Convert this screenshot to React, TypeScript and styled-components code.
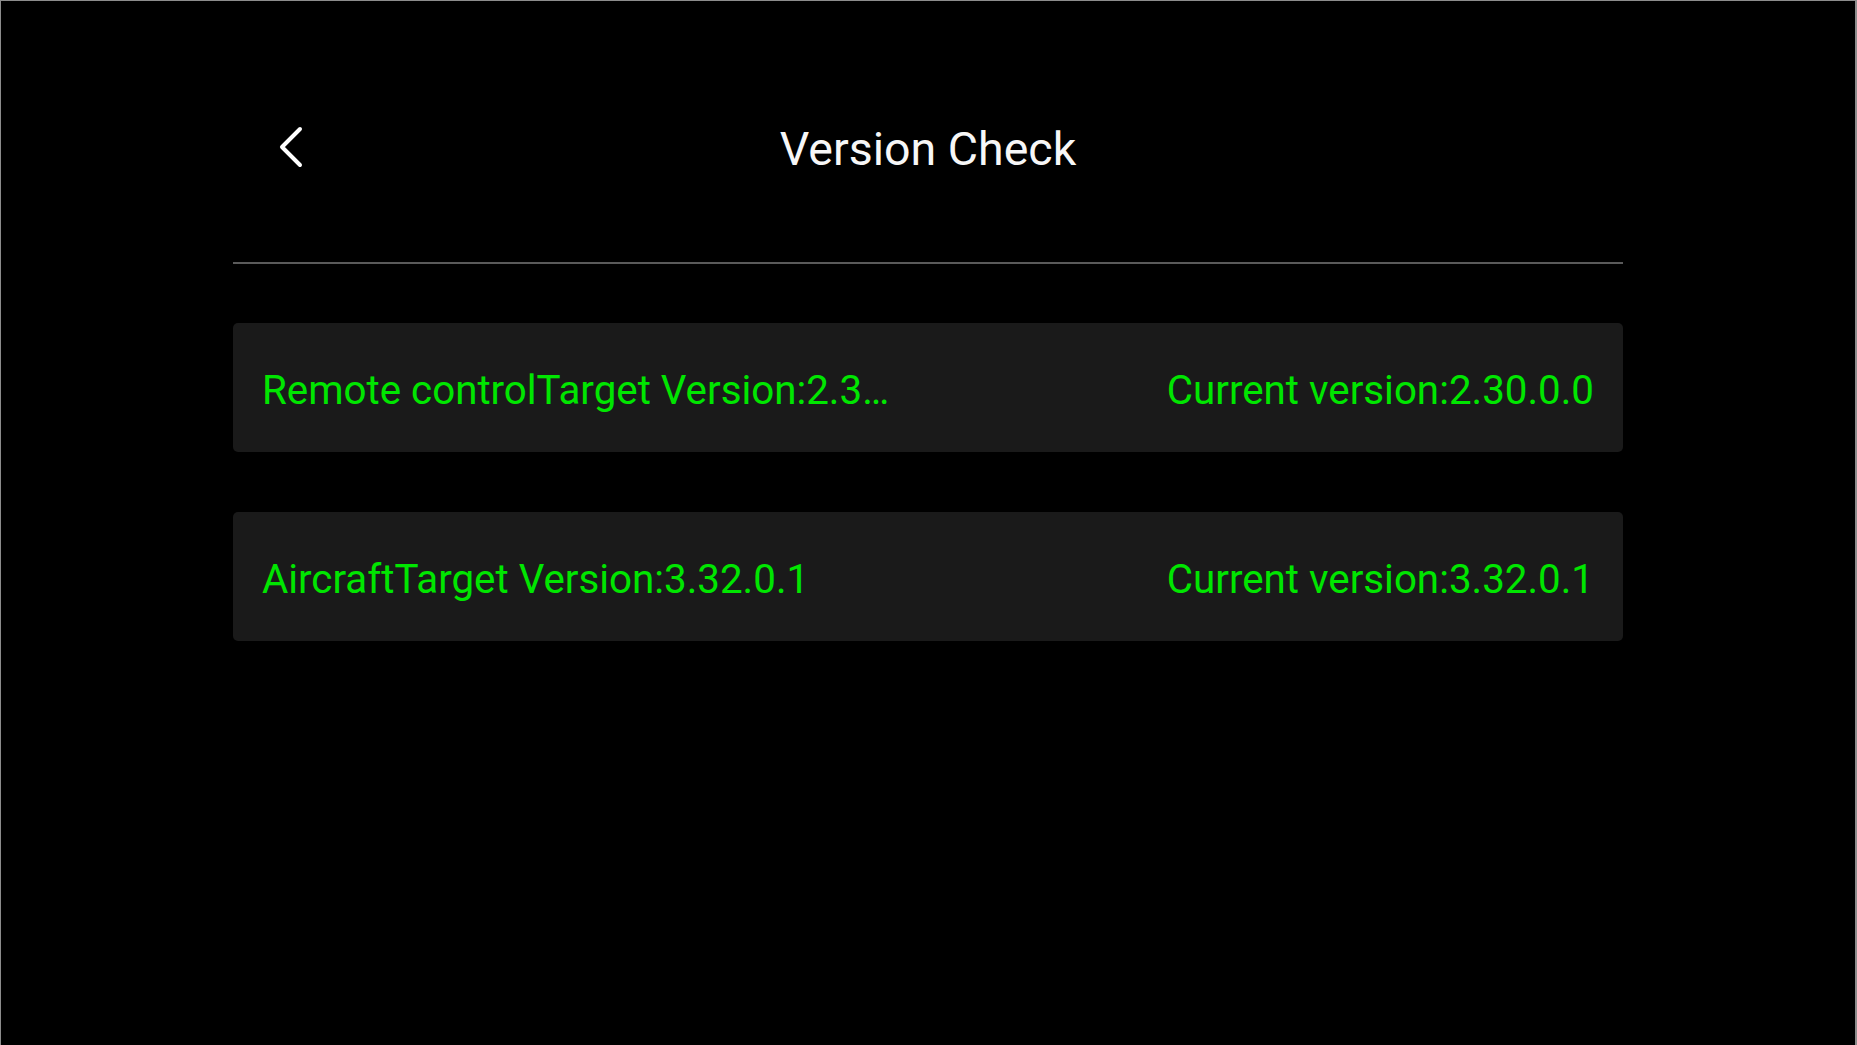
import React from 'react';
import styled, {createGlobalStyle} from 'styled-components';

interface VersionRowProps {
  target: string;
  current: string;
}

const GlobalStyle = createGlobalStyle`
  html, body {
    margin: 0;
    padding: 0;
    background: #000;
  }
  * {
    box-sizing: border-box;
  }
`;

const Screen = styled.div`
  width: 1857px;
  height: 1045px;
  background: #000;
  border-top: 1px solid #8c8c8c;
  border-left: 1px solid #8c8c8c;
  border-right: 2px solid #8c8c8c;
  font-family: Roboto, 'Noto Sans', sans-serif;
  overflow: hidden;
`;

const Content = styled.div`
  margin: 0 232px 0 232px;
  display: flex;
  flex-direction: column;
`;

const Header = styled.header`
  display: grid;
  grid-template-columns: 1fr auto 1fr;
  align-items: center;
  height: 100px;
  margin-top: 98px;
  margin-bottom: 63px;
`;

const BackButton = styled.button`
  justify-self: start;
  display: flex;
  align-items: center;
  margin-left: 45px;
  margin-top: -4px;
  padding: 0;
  border: none;
  background: none;
  cursor: pointer;
`;

const Title = styled.h1`
  margin: 0;
  font-size: 46.5px;
  font-weight: 400;
  color: #f7f7f7;
  white-space: nowrap;
`;

const Divider = styled.hr`
  margin: 0;
  border: none;
  height: 2px;
  background: #5a5a5a;
`;

const List = styled.div`
  display: flex;
  flex-direction: column;
  gap: 60px;
  margin-top: 59px;
`;

const Row = styled.div`
  display: flex;
  align-items: center;
  justify-content: space-between;
  height: 129px;
  padding: 5px 29px 0;
  border-radius: 5px;
  background: #1a1a1a;
`;

const Label = styled.span<{$truncate?: boolean}>`
  font-size: 40.3px;
  color: #00e600;
  white-space: nowrap;
  overflow: hidden;
  text-overflow: ellipsis;
  max-width: ${(p) => (p.$truncate ? '643px' : 'none')};
`;

const Chevron = () => (
  <svg width="26" height="42" viewBox="0 0 26 42">
    <polyline
      points="22,3 4,21 22,39"
      fill="none"
      stroke="#fff"
      strokeWidth="4"
      strokeLinecap="round"
      strokeLinejoin="round"
    />
  </svg>
);

const VersionRow = ({target, current}: VersionRowProps) => (
  <Row>
    <Label $truncate>{target}</Label>
    <Label>{current}</Label>
  </Row>
);

const App = () => {
  return (
    <Screen>
      <GlobalStyle />
      <Content>
        <Header>
          <BackButton aria-label="Back">
            <Chevron />
          </BackButton>
          <Title>Version Check</Title>
          <span />
        </Header>
        <Divider />
        <List>
          <VersionRow
            target="Remote controlTarget Version:2.30.0.0"
            current="Current version:2.30.0.0"
          />
          <VersionRow
            target="AircraftTarget Version:3.32.0.1"
            current="Current version:3.32.0.1"
          />
        </List>
      </Content>
    </Screen>
  );
};

export default App;
